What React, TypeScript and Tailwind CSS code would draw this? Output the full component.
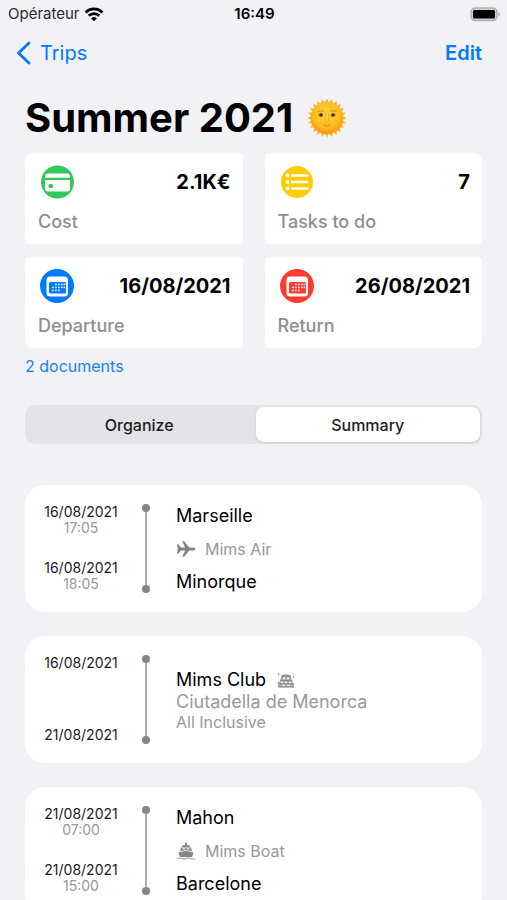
import { useState } from "react";
import type { ReactNode } from "react";

const sunRays = Array.from({ length: 24 }, (_, i) => i * 15);

function WifiIcon() {
  return (
    <svg viewBox="0 0 20 15" className="h-[15px] w-5" fill="none" stroke="#000" strokeWidth="2.8" aria-hidden="true">
      <path d="M1.6 5.4a12 12 0 0 1 16.8 0" />
      <path d="M4.8 8.8a7.4 7.4 0 0 1 10.4 0" />
      <path d="M10 14.2 7.2 11.4a4 4 0 0 1 5.6 0Z" fill="#000" stroke="none" />
    </svg>
  );
}

function BatteryIcon() {
  return (
    <svg viewBox="0 0 32 15" className="h-[15px] w-8" aria-hidden="true">
      <rect x="2" y="1" width="26" height="12.5" rx="4" fill="#d0d0d2" stroke="#b0b0b2" strokeWidth="1.5" />
      <rect x="4" y="3" width="22" height="8.500" rx="1.5" fill="#000" />
      <path d="M29.5 5q2.6 2.3 0 4.6Z" fill="#a5a5a7" />
    </svg>
  );
}

function SunIcon() {
  return (
    <svg viewBox="0 0 40 40" className="size-10" role="img" aria-label="Sun">
      <defs>
        <radialGradient id="sun" cx="0.5" cy="0.38" r="0.62">
          <stop offset="0" stopColor="#ffd23a" />
          <stop offset="0.65" stopColor="#fdbd22" />
          <stop offset="1" stopColor="#ee970f" />
        </radialGradient>
      </defs>
      {sunRays.map((angle) => (
        <path key={angle} d="M17.8 5 20 .4 22.2 5Z" fill="#fbb321" transform={`rotate(${angle} 20 20)`} />
      ))}
      <circle cx="20" cy="20" r="16" fill="url(#sun)" />
      <path d="M10.500 14q3-2.400 6.500-.4M23 13.600q3.500-2 6.500.4" fill="none" stroke="#e39a16" strokeWidth="1.2" />
      <path d="M18.300 15v7.500q0 1.800 1.700 1.800t1.700-1.800V15" fill="none" stroke="#eda51c" strokeWidth=".8" />
      <ellipse cx="13.800" cy="17" rx="2.700" ry="1.700" fill="#d18a17" />
      <ellipse cx="26.200" cy="17" rx="2.700" ry="1.700" fill="#d18a17" />
      <circle cx="14" cy="17" r="1.700" fill="#46310f" />
      <circle cx="26" cy="17" r="1.700" fill="#46310f" />
      <path d="M16.800 26.600q3.200 2.800 6.400 0" fill="none" stroke="#d58a12" strokeWidth="1.100" strokeLinecap="round" />
    </svg>
  );
}

function CardIcon() {
  return (
    <svg viewBox="0 0 34 34" className="size-[34px]" aria-hidden="true">
      <circle cx="17.5" cy="17" r="16.5" fill="#34c759" />
      <path d="M8 8.5h19a3 3 0 0 1 3 3v1.3H5v-1.3a3 3 0 0 1 3-3Z" fill="#fff" />
      <path d="M5 15h25v8.5a3 3 0 0 1-3 3H8a3 3 0 0 1-3-3Z" fill="#fff" />
      <rect x="8.500" y="19" width="4.500" height="4" rx="1.500" fill="#34c759" />
    </svg>
  );
}

function ListIcon() {
  return (
    <svg viewBox="0 0 34 34" className="size-[34px]" aria-hidden="true">
      <circle cx="17" cy="17" r="16" fill="#ffcc00" />
      <g fill="#fff">
        <circle cx="7.5" cy="10.5" r="1.9" />
        <circle cx="7.5" cy="17" r="1.9" />
        <circle cx="7.5" cy="23.5" r="1.9" />
        <rect x="11" y="9.3" width="17.5" height="2.4" rx="1.2" />
        <rect x="11" y="15.8" width="17.5" height="2.4" rx="1.2" />
        <rect x="11" y="22.3" width="17.5" height="2.4" rx="1.2" />
      </g>
    </svg>
  );
}

const calendarDots = [
  [16, 15.5], [19, 15.5], [22, 15.5], [24.5, 15.5],
  [13, 18.5], [16, 18.5], [19, 18.5], [22, 18.5], [24.5, 18.5],
  [13, 21.5], [16, 21.5], [19, 21.5],
];

function CalendarIcon({ color }: { color: string }) {
  return (
    <svg viewBox="0 0 34 34" className="size-[34px]" aria-hidden="true">
      <circle cx="17" cy="17" r="17" fill={color} />
      <rect x="6.5" y="7.5" width="21.5" height="20" rx="3.5" fill="#fff" />
      <rect x="9" y="13" width="17" height="11.5" rx="1.5" fill={color} />
      {calendarDots.map(([x, y]) => (
        <rect key={`${x}-${y}`} x={x - 1} y={y - 1} width="1.8" height="1.8" rx=".4" fill="#fff" fillOpacity=".85" />
      ))}
    </svg>
  );
}

function PlaneIcon() {
  return (
    <svg viewBox="0 0 20 18" className="h-[18px] w-5" fill="#858587" aria-hidden="true">
      <path d="M1 4.300h1.400l2.500 3.200h4.200L6.200 1.300h1.900l5.300 6.200h3.900c1.100 0 2.100.8 2.100 1.500s-1 1.500-2.100 1.500h-3.900l-5.300 6.200H6.200l2.900-6.200H4.900l-2.500 3.200H1L1.800 9Z" />
    </svg>
  );
}

function HotelIcon() {
  return (
    <svg viewBox="0 0 20 16" className="h-4 w-5" aria-hidden="true">
      <path d="M5.500 3.500Q10 .8 14.500 3.500L16 9H4Z" fill="#a3a3a5" />
      <path d="M3.500 9h13l1.500 3v3H2v-3Z" fill="#b4b4b6" />
      <path d="M5 4h10M4.300 8.500h11.400M2 14.800h16M2.500 11.800h15" fill="none" stroke="#858587" strokeWidth="1.2" />
      <path d="M7 5.500h2v1.800H7ZM11 5.500h2v1.800h-2ZM5 10h2v1H5ZM9 10h2v1H9ZM13 10h2v1h-2ZM6 12.800h3v1H6ZM11 12.800h3v1h-3Z" fill="#fff" />
      <path d="M1.500 2h2M2.500 1v2.500M16.500 1.500l1.500 1M17.300 4v2.500M1.500 11.500l1.500-2" fill="none" stroke="#a3a3a5" strokeWidth="1" />
    </svg>
  );
}

function BoatIcon() {
  return (
    <svg viewBox="0 0 20 18" className="h-[18px] w-5" fill="#858587" aria-hidden="true">
      <path d="M9 .8h2v2.400h2.500l.5 1.800H6l.5-1.800H9ZM5 5.600h10l1 3.600-6-1.200-6 1.200Z" />
      <path d="m2.500 10.600 7.500-1.800 7.500 1.800-1.400 4.400H3.900Z" />
      <path d="M.8 16.700q2.300-1.300 4.600-.2 2.300 1 4.600 0 2.300-1 4.600 0 2.300.9 4.600.2" fill="none" stroke="#a3a3a5" strokeWidth="1.2" />
      <path d="M6.500 6.300h2.800v.9H6.500ZM10.700 6.300h2.800v.9h-2.800Z" fill="#fff" />
    </svg>
  );
}

const stats = [
  { label: "Cost", value: "2.1K€", icon: <CardIcon />, corner: "rounded-tl-lg" },
  { label: "Tasks to do", value: "7", icon: <ListIcon />, corner: "rounded-tr-lg" },
  { label: "Departure", value: "16/08/2021", icon: <CalendarIcon color="#007aff" />, corner: "rounded-bl-lg" },
  { label: "Return", value: "26/08/2021", icon: <CalendarIcon color="#ff3b30" />, corner: "rounded-br-lg" },
];

const tabs = ["Organize", "Summary"];

type StepProps = {
  start: string;
  startTime?: string;
  end: string;
  endTime?: string;
  children: ReactNode;
};

function Step({ start, startTime, end, endTime, children }: StepProps) {
  return (
    <li className="flex h-[127px] rounded-[20px] bg-white px-4 py-[19px]">
      <div className="flex w-20 shrink-0 flex-col justify-between text-center text-sm leading-4">
        <div>
          <p className="text-[#1c1c1e]">{start}</p>
          {startTime && <p className="text-[#98989b]">{startTime}</p>}
        </div>
        <div className="pb-px">
          <p className="text-[#1c1c1e]">{end}</p>
          {endTime && <p className="text-[#98989b]">{endTime}</p>}
        </div>
      </div>
      <div className="ml-[21px] flex w-2 shrink-0 flex-col items-center" aria-hidden="true">
        <span className="size-2 rounded-full bg-[#858587]" />
        <span className="w-[2px] flex-1 bg-[#aeaeb0]" />
        <span className="size-2 rounded-full bg-[#858587]" />
      </div>
      <div className="ml-[26px] flex min-w-0 flex-1 flex-col justify-center">{children}</div>
    </li>
  );
}

function Journey({ from, to, company, icon }: { from: string; to: string; company: string; icon: ReactNode }) {
  return (
    <div className="flex flex-col gap-[9px] text-lg leading-6 text-black">
      <p>{from}</p>
      <p className="flex items-center gap-[9px] text-base leading-6 text-[#98989b]">
        {icon}
        {company}
      </p>
      <p>{to}</p>
    </div>
  );
}

export default function App() {
  const [active, setActive] = useState("Summary");

  return (
    <div className="h-screen overflow-hidden bg-[#f2f1f6] font-['Inter','Liberation_Sans',sans-serif] text-black">
      {/* Status bar */}
      <div className="grid h-7 grid-cols-3 items-center pr-[6px] pl-2 text-[15px]">
        <span className="flex items-center gap-1 text-[#2b2b2d]">
          Opérateur
          <WifiIcon />
        </span>
        <span className="text-center font-semibold">16:49</span>
        <span className="flex justify-end">
          <BatteryIcon />
        </span>
      </div>

      <nav className="flex h-[50px] items-center justify-between pr-[25px] pl-4 text-xl text-[#007aff]">
        <a href="#trips" className="flex items-center gap-2">
          <svg viewBox="0 0 16 24" className="h-6 w-4" fill="none" stroke="currentColor" strokeWidth="2.8" strokeLinecap="round" strokeLinejoin="round" aria-hidden="true">
            <path d="M13 2 2.500 12 13 22" />
          </svg>
          Trips
        </a>
        <button type="button" className="font-semibold">Edit</button>
      </nav>

      <main className="px-[25px]">
        <h1 className="flex items-center gap-[14px] pt-4 text-[40px] leading-[48px] font-bold">
          Summer 2021
          <SunIcon />
        </h1>

        <div className="mt-[11px] grid grid-cols-2 gap-x-[22px] gap-y-[13px]">
          {stats.map((stat) => (
            <section key={stat.label} className={`flex h-[91px] flex-col justify-between rounded bg-white pt-3 pr-3 pb-[10px] pl-[13px] ${stat.corner}`}>
              <div className="flex items-center justify-between pl-[2px]">
                {stat.icon}
                <span className="text-xl font-bold">{stat.value}</span>
              </div>
              <h2 className="text-lg leading-6 font-medium text-[#8e8e91]">{stat.label}</h2>
            </section>
          ))}
        </div>

        <a href="#documents" className="mt-[6px] block text-base leading-6 text-[#1683f5]">2 documents</a>

        {/* Segmented control */}
        <div role="tablist" className="mt-[27px] flex h-[39px] gap-1 rounded-[10px] bg-[#e4e3e8] p-[2px]">
          {tabs.map((tab) => (
            <button
              key={tab}
              type="button"
              role="tab"
              aria-selected={tab === active}
              onClick={() => setActive(tab)}
              className={`flex-1 rounded-lg text-base font-medium text-[#1c1c1e] ${tab === active ? "bg-white shadow" : ""}`}
            >
              {tab}
            </button>
          ))}
        </div>

        <ul className="mt-[41px] flex flex-col gap-6">
          <Step start="16/08/2021" startTime="17:05" end="16/08/2021" endTime="18:05">
            <Journey from="Marseille" to="Minorque" company="Mims Air" icon={<PlaneIcon />} />
          </Step>
          <Step start="16/08/2021" end="21/08/2021">
            <div>
              <p className="flex items-center gap-[10px] text-lg leading-6 text-black">
                Mims Club
                <HotelIcon />
              </p>
              <p className="text-lg leading-5 text-[#98989b]">Ciutadella de Menorca</p>
              <p className="text-base leading-5 text-[#98989b]">All Inclusive</p>
            </div>
          </Step>
          <Step start="21/08/2021" startTime="07:00" end="21/08/2021" endTime="15:00">
            <Journey from="Mahon" to="Barcelone" company="Mims Boat" icon={<BoatIcon />} />
          </Step>
        </ul>
      </main>
    </div>
  );
}
